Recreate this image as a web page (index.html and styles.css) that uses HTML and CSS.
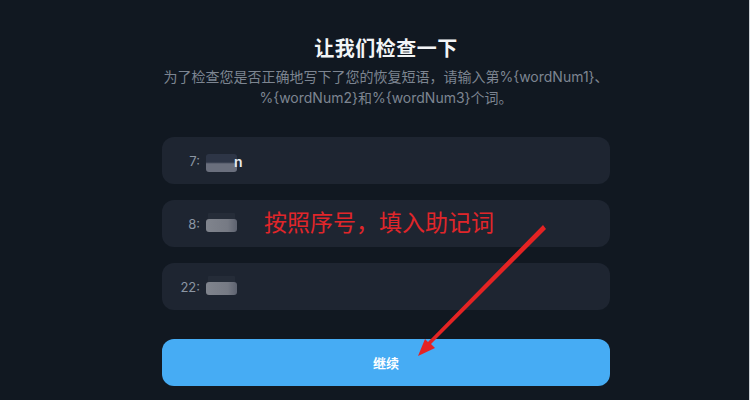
FILE: index.html
```html
<!DOCTYPE html>
<html lang="zh">
<head>
<meta charset="utf-8">
<title>让我们检查一下</title>
<link rel="stylesheet" href="styles.css">
</head>
<body>
<div class="page">
  <main class="panel">
    <h1 class="title">让我们检查一下</h1>
    <p class="subtitle">为了检查您是否正确地写下了您的恢复短语，请输入第%{wordNum1}、<br>%{wordNum2}和%{wordNum3}个词。</p>
    <div class="fields">
      <div class="field"><span class="num">7:</span><span class="blur blur-a"></span><span class="tail">n</span></div>
      <div class="field"><span class="num">8:</span><span class="blur blur-b"></span></div>
      <div class="field"><span class="num">22:</span><span class="blur blur-b"></span></div>
    </div>
    <button class="continue">继续</button>
  </main>
  <div class="note">按照序号，填入助记词</div>
  <svg class="arrow" width="750" height="400" viewBox="0 0 750 400">
    <polygon points="543,225 546,229 431,344 435,348 418,356 425,339 428,342" fill="#e42323"/>
  </svg>
</div>
</body>
</html>
```
FILE: styles.css
```css
html, body {
  margin: 0;
  padding: 0;
  background: #111821;
}
.page {
  position: relative;
  width: 749px;
  height: 400px;
  border-right: 1px solid #cfd3d8;
  overflow: hidden;
  font-family: "Noto Sans CJK SC", "Noto Sans", sans-serif;
}
.panel {
  display: flex;
  flex-direction: column;
  width: 448px;
  margin-left: 162px;
  padding-top: 35px;
}
.title {
  margin: 0;
  text-align: center;
  color: #f2f4f6;
  font-size: 20px;
  line-height: 26px;
  font-weight: 700;
  letter-spacing: 0.5px;
}
.subtitle {
  margin: 5px -10px 0;
  text-align: center;
  color: #7d8591;
  font-size: 14px;
  line-height: 21px;
  font-family: "Inter", "Noto Sans CJK SC", sans-serif;
}
.fields {
  display: flex;
  flex-direction: column;
  gap: 16px;
  margin-top: 29px;
}
.field {
  display: flex;
  align-items: center;
  height: 47px;
  border-radius: 12px;
  background: #1e2531;
  padding-left: 18px;
}
.num {
  width: 20px;
  text-align: right;
  color: #8c96a3;
  font-size: 13px;
  font-family: "Inter", sans-serif;
}
.blur {
  display: inline-block;
  margin-left: 6px;
  width: 31px;
  border-radius: 3px;
}
.blur-a {
  height: 18px;
  background: linear-gradient(#2d3546 0%, #2d3546 45%, #6a6f7d 55%, #6a6f7d 100%);
  filter: blur(0.6px);
  margin-top: 4px;
}
.blur-b {
  height: 13px;
  background: linear-gradient(90deg, #80848d 0%, #767a84 70%, #5e6370 100%);
  filter: blur(0.5px);
  margin-top: 4px;
  box-shadow: 0 -8px 0 -2px #252c38;
}
.tail {
  position: relative;
  margin-left: -3px;
  color: #e8ebef;
  font-size: 14px;
  font-weight: 600;
  font-family: "Inter", sans-serif;
  margin-top: 2px;
}
.continue {
  margin-top: 29px;
  height: 47px;
  border: none;
  border-radius: 12px;
  background: #46acf4;
  color: #ffffff;
  font-size: 13px;
  font-weight: 700;
  font-family: "Noto Sans CJK SC", sans-serif;
}
.note {
  position: absolute;
  left: 264px;
  top: 205px;
  color: #e0262a;
  font-size: 23px;
  line-height: 32px;
  font-family: "Noto Sans CJK SC", sans-serif;
}
.arrow {
  position: absolute;
  left: 0;
  top: 0;
  pointer-events: none;
}
```
